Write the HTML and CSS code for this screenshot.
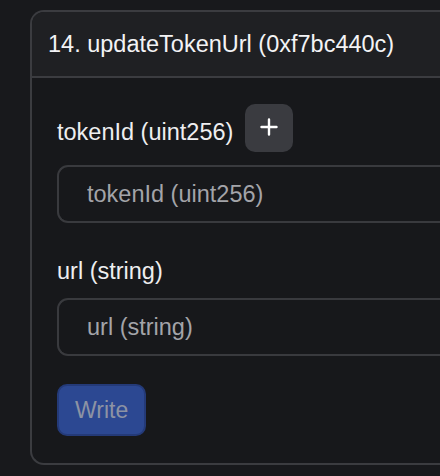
FILE: index.html
```html
<!DOCTYPE html>
<html lang="en">
<head>
<meta charset="utf-8">
<title>updateTokenUrl</title>
<link rel="stylesheet" href="styles.css">
</head>
<body>
<div class="page">
  <section class="card">
    <header class="card-header">14. updateTokenUrl (0xf7bc440c)</header>
    <div class="card-body">
      <div class="field">
        <div class="label-row">
          <label class="label label-offset" for="tokenId">tokenId (uint256)</label>
          <button class="icon-btn" type="button" aria-label="Add">
            <svg width="18" height="18" viewBox="0 0 18 18" aria-hidden="true">
              <path d="M9 1.5v15M1.5 9h15" stroke="#ffffff" stroke-width="2.4" stroke-linecap="round" fill="none"/>
            </svg>
          </button>
        </div>
        <input class="input" id="tokenId" type="text" placeholder="tokenId (uint256)">
      </div>
      <div class="field">
        <div class="label-row">
          <label class="label" for="url">url (string)</label>
        </div>
        <input class="input" id="url" type="text" placeholder="url (string)">
      </div>
      <button class="write-btn" type="button" disabled>Write</button>
    </div>
  </section>
</div>
</body>
</html>
```

FILE: styles.css
```css
* {
  box-sizing: border-box;
}

html, body {
  margin: 0;
  padding: 0;
  background: #18191c;
}

body {
  font-family: "Liberation Sans", Arial, sans-serif;
  color: #ececee;
  width: 440px;
  height: 476px;
  overflow: hidden;
}

.page {
  padding: 10px 0 0 30px;
}

.card {
  border: 2px solid #3b3c40;
  border-right: none;
  border-radius: 14px 0 0 14px;
  background: #17181b;
  overflow: hidden;
}

.card-header {
  height: 66px;
  display: flex;
  align-items: center;
  padding-left: 16px;
  background: #1f2023;
  border-bottom: 2px solid #3b3c40;
  font-size: 23.5px;
  color: #f3f3f5;
  white-space: nowrap;
}

.card-body {
  padding: 26px 0 27px 25px;
}

.field {
  display: flex;
  flex-direction: column;
  gap: 13px;
  margin-bottom: 34px;
}

.field + .field {
  margin-bottom: 28px;
}

.label-row {
  display: flex;
  align-items: center;
  gap: 12px;
}

.label {
  font-size: 23.5px;
  line-height: 28px;
  color: #eeeef0;
}

.label-offset {
  padding-top: 7px;
}

.icon-btn {
  width: 48px;
  height: 48px;
  border: none;
  border-radius: 10px;
  background: #3a3b40;
  display: flex;
  align-items: center;
  justify-content: center;
  padding: 0 0 3px 0;
}

.icon-btn svg {
  display: block;
}

.input {
  display: block;
  width: 100%;
  height: 58px;
  border: 2px solid #393a3e;
  border-right: none;
  border-radius: 11px 0 0 11px;
  background: #17181b;
  padding: 0 0 0 28px;
  font-family: "Liberation Sans", Arial, sans-serif;
  font-size: 23.5px;
  color: #e6e6e8;
  outline: none;
}

.input::placeholder {
  color: #a3a4a9;
  opacity: 1;
}

.write-btn {
  height: 52px;
  padding: 0 16px;
  border: 2px solid #243a78;
  border-radius: 10px;
  background: #2c4892;
  font-family: "Liberation Sans", Arial, sans-serif;
  font-size: 23px;
  color: #8c93a4;
}
```
